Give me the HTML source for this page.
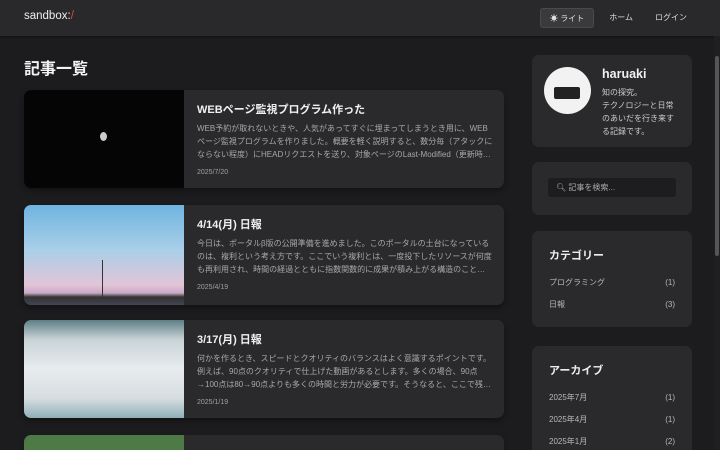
<!DOCTYPE html>
<html style="width:720px;height:450px;overflow:hidden"><head><meta charset="utf-8"><style>
*{box-sizing:border-box;margin:0;padding:0}
body{width:720px;height:450px;overflow:hidden;background:#1c1c1e;font-family:"Liberation Sans","Noto Sans CJK JP",sans-serif;color:#e8e8e8;position:relative}
.wrap{position:absolute;left:0;top:0;width:720px;height:450px;overflow:hidden}
.hdr{position:absolute;left:0;top:0;width:720px;height:36px;background:#29292b;box-shadow:0 1px 3px rgba(0,0,0,.4)}
.logo{position:absolute;left:24px;top:10px;font-size:11.5px;color:#eee}
.logo span{color:#e0453a}
.nav{position:absolute;right:26px;top:8px;display:flex;gap:8px;font-size:8px;color:#ddd}
.nav div{height:20px;line-height:19px;padding:0 7px}
.nav .lt{background:#3a3a3c;border:1px solid #4a4a4c;border-radius:3px;padding:0 9px}
h1{position:absolute;left:24px;top:55px;font-size:16px;font-weight:bold;color:#f2f2f2}
.card{position:absolute;left:24px;width:480px;height:98px;background:#2a2a2c;border-radius:7px;overflow:hidden;box-shadow:0 3px 6px rgba(0,0,0,.35)}
.img{position:absolute;left:0;top:0;width:160px;height:100%}
.txt{position:absolute;left:173px;top:11px;width:298px}
.t{font-size:11px;font-weight:bold;color:#f0f0f0;margin-bottom:5px}
.d{font-size:8px;line-height:13px;color:#a8a8aa;height:39px;overflow:hidden}
.dt{font-size:7px;color:#a0a0a0;margin-top:8px}
.side{position:absolute;left:532px;width:160px;background:#2a2a2c;border-radius:7px}
.row{display:flex;justify-content:space-between;font-size:8px;color:#b8b8b8;padding:0 17px;height:22px;line-height:22px}
.st{font-size:11px;font-weight:bold;color:#eee;padding:16px 17px 9px}
.sb{position:absolute;left:714px;top:36px;width:6px;height:414px;background:#1f1f21}
</style></head><body><div class="wrap">
<div class="hdr"><div class="logo">sandbox:<span>/</span></div>
<div class="nav"><div class="lt">☀ ライト</div><div>ホーム</div><div>ログイン</div></div></div>
<h1>記事一覧</h1>
<div class="card" style="top:90px"><div class="img" style="background:#050505"><div style="position:absolute;left:76px;top:42px;width:7px;height:9px;border-radius:50%;background:#ccc"></div></div>
<div class="txt"><div class="t">WEBページ監視プログラム作った</div><div class="d">WEB予約が取れないときや、人気があってすぐに埋まってしまうとき用に、WEBページ監視プログラムを作りました。概要を軽く説明すると、数分毎（アタックにならない程度）にHEADリクエストを送り、対象ページのLast-Modified（更新時…</div><div class="dt">2025/7/20</div></div></div>
<div class="card" style="top:205px;height:100px"><div class="img" style="background:linear-gradient(180deg,#6fb4e0 0%,#a9cfe8 45%,#e2c5d8 80%,#c9a8c4 88%,#333 92%,#445 100%)"><div style="position:absolute;left:78px;top:55px;width:1px;height:38px;background:#333"></div></div>
<div class="txt"><div class="t">4/14(月) 日報</div><div class="d">今日は、ポータルβ版の公開準備を進めました。このポータルの土台になっているのは、複利という考え方です。ここでいう複利とは、一度投下したリソースが何度も再利用され、時間の経過とともに指数関数的に成果が積み上がる構造のこと…</div><div class="dt">2025/4/19</div></div></div>
<div class="card" style="top:320px"><div class="img" style="background:linear-gradient(180deg,#5e7f86 0%,#c9d3d6 20%,#e8ecee 50%,#d6dde0 80%,#8fb0b8 100%)"></div>
<div class="txt"><div class="t">3/17(月) 日報</div><div class="d">何かを作るとき、スピードとクオリティのバランスはよく意識するポイントです。例えば、90点のクオリティで仕上げた動画があるとします。多くの場合、90点→100点は80→90点よりも多くの時間と労力が必要です。そうなると、ここで残…</div><div class="dt">2025/1/19</div></div></div>
<div class="card" style="top:435px;height:15px;border-radius:7px 7px 0 0"><div class="img" style="background:#4d7a45"></div></div>
<div class="side" style="top:55px;height:92px">
<div style="position:absolute;left:12px;top:12px;width:47px;height:47px;border-radius:50%;background:#f2f2f2;overflow:hidden"><div style="position:absolute;left:10px;top:20px;width:26px;height:12px;background:#222;border-radius:2px"></div></div>
<div style="position:absolute;left:70px;top:12px;font-size:12.5px;font-weight:bold;color:#f0f0f0">haruaki</div>
<div style="position:absolute;left:70px;top:31px;font-size:8px;line-height:13px;color:#ccc;width:76px">知の探究。<br>テクノロジーと日常のあいだを行き来する記録です。</div></div>
<div class="side" style="top:162px;height:53px"><div style="position:absolute;left:16px;top:16px;width:128px;height:19px;background:#1d1d1f;border-radius:3px;font-size:8px;color:#aaa;line-height:19px;padding-left:8px">🔍︎ 記事を検索...</div></div>
<div class="side" style="top:231px;height:96px"><div class="st">カテゴリー</div><div class="row"><span>プログラミング</span><span>(1)</span></div><div class="row"><span>日報</span><span>(3)</span></div></div>
<div class="side" style="top:346px;height:104px;border-radius:7px 7px 0 0"><div class="st">アーカイブ</div><div class="row"><span>2025年7月</span><span>(1)</span></div><div class="row"><span>2025年4月</span><span>(1)</span></div><div class="row"><span>2025年1月</span><span>(2)</span></div></div>
<div class="sb"><div style="position:absolute;left:1px;top:20px;width:4px;height:200px;background:#555;border-radius:2px"></div></div>
</div></body></html>
